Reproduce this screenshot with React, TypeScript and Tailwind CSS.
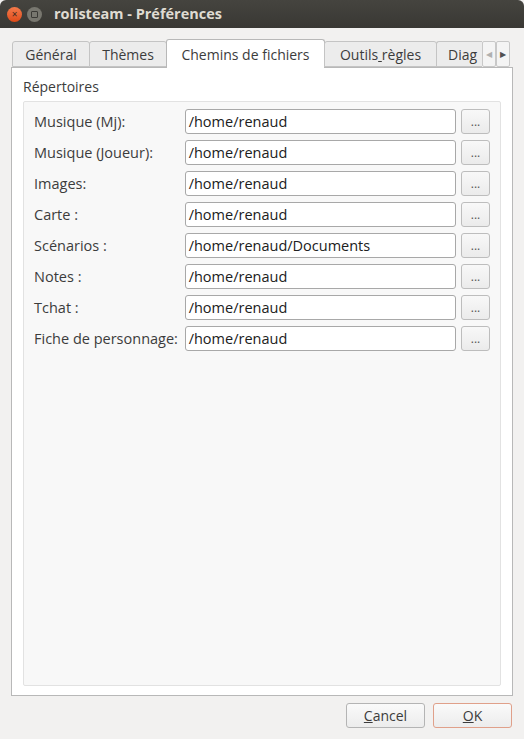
const rows: [string, string][] = [
  ['Musique (Mj):', '/home/renaud'],
  ['Musique (Joueur):', '/home/renaud'],
  ['Images:', '/home/renaud'],
  ['Carte :', '/home/renaud'],
  ['Scénarios :', '/home/renaud/Documents'],
  ['Notes :', '/home/renaud'],
  ['Tchat :', '/home/renaud'],
  ['Fiche de personnage:', '/home/renaud'],
];

const font = { fontFamily: '"Open Sans", "DejaVu Sans", sans-serif' };

function Tab({ label, active, w }: { label: React.ReactNode; active?: boolean; w: string }) {
  if (active) {
    return (
      <div className={`${w} -mb-px flex h-[29px] items-center justify-center rounded-t-[3px] border border-b-0 border-[#b8b8b8] bg-white text-[14px] text-[#3c3c3c]`}>
        {label}
      </div>
    );
  }
  return (
    <div className={`${w} flex h-[26px] items-center justify-center rounded-t-[3px] border border-[#c4c4c4] bg-[#ececec] text-[14px] text-[#3c3c3c]`}>
      {label}
    </div>
  );
}

export default function App() {
  return (
    <div className="h-[739px] w-[524px] overflow-hidden bg-[#f2f1f0]" style={font}>
      {/* title bar */}
      <div className="flex h-[28px] items-center rounded-t-[6px] bg-gradient-to-b from-[#45443f] to-[#393834] pl-[7px]">
        <div className="flex h-[15px] w-[15px] items-center justify-center rounded-full bg-gradient-to-b from-[#f37a4a] to-[#df4a16] text-[10px] leading-none text-[#3a2a20]">
          ×
        </div>
        <div className="ml-[5px] flex h-[15px] w-[15px] items-center justify-center rounded-full bg-[#78776f]">
          <div className="h-[7px] w-[7px] rounded-[1px] border border-[#3b3a36]" />
        </div>
        <span className="ml-[12px] text-[14.5px] font-bold text-[#dfdbd2]">rolisteam - Préférences</span>
      </div>

      {/* tabs */}
      <div className="ml-[12px] mt-[11px] flex items-end">
        <Tab w="w-[78px]" label="Général" />
        <Tab w="w-[78px] -ml-px" label="Thèmes" />
        <Tab w="w-[159px] -ml-px" label="Chemins de fichiers" active />
        <Tab w="w-[113px] -ml-px" label={<span>Outils<span className="underline">&nbsp;</span>règles</span>} />
        <div className="-ml-px flex h-[26px] w-[46px] items-center overflow-hidden rounded-tl-[3px] border border-r-0 border-[#c4c4c4] bg-[#ececec] pl-[11px] text-[14px] text-[#3c3c3c]">
          Diag
        </div>
        <div className="flex h-[26px] w-[14px] items-center justify-center rounded-[2px] border border-[#c8c8c8] bg-[#f4f4f4] text-[8px] text-[#b0b0b0]">◀</div>
        <div className="flex h-[26px] w-[14px] items-center justify-center rounded-[2px] border border-[#c8c8c8] bg-[#f4f4f4] text-[8px] text-[#505050]">▶</div>
      </div>

      {/* tab panel */}
      <div className="ml-[11px] flex h-[629px] w-[502px] flex-col border border-[#b8b8b8] bg-white px-[11px] pb-[9px]">
        <div className="pt-[10px] text-[14px] leading-[18px] text-[#3c3c3c]">Répertoires</div>
        <div className="mt-[5px] flex flex-1 flex-col gap-[6px] rounded-[2px] border border-[#e2e2e2] bg-[#f8f8f8] px-[10px] pt-[7px]">
          {rows.map(([label, path]) => (
            <div key={label} className="flex h-[25px] items-center">
              <div className="w-[151px] text-[14.5px] text-[#3c3c3c]">{label}</div>
              <div className="flex h-[25px] w-[272px] items-center rounded-[3px] border border-[#a8a8a8] bg-white px-[3px] text-[14.5px] text-[#202020]">
                {path}
              </div>
              <div className="ml-[5px] flex h-[25px] w-[29px] items-end justify-center rounded-[3px] border border-[#bdbdbd] bg-gradient-to-b from-[#f8f8f8] to-[#ebebeb] pb-[5px] text-[12px] leading-none text-[#555]">
                ...
              </div>
            </div>
          ))}
        </div>
      </div>

      {/* buttons */}
      <div className="mt-[7px] flex justify-end gap-[8px] pr-[12px]">
        <div className="flex h-[25px] w-[79px] items-center justify-center rounded-[3px] border border-[#b4b4b4] bg-gradient-to-b from-[#fafafa] to-[#ececec] text-[14px] text-[#3c3c3c]">
          <span><span className="underline">C</span>ancel</span>
        </div>
        <div className="flex h-[25px] w-[79px] items-center justify-center rounded-[3px] border border-[#e0a08a] bg-gradient-to-b from-[#fafafa] to-[#ececec] text-[14px] text-[#3c3c3c]">
          <span><span className="underline">O</span>K</span>
        </div>
      </div>
    </div>
  );
}
